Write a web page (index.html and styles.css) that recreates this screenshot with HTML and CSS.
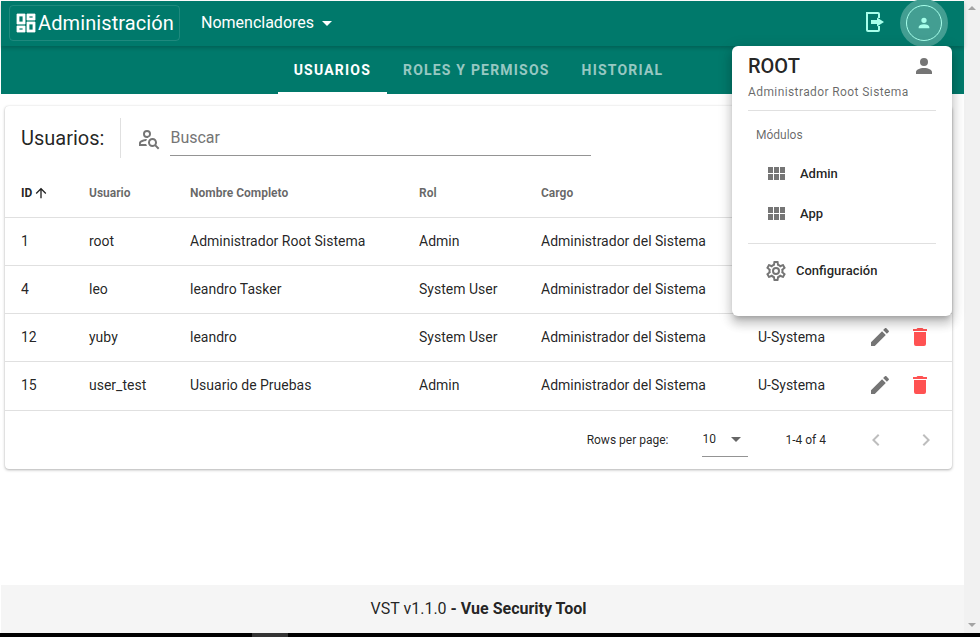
FILE: index.html
```html
<!DOCTYPE html>
<html lang="en">
<head>
  <meta charset="UTF-8" />
  <title>VST - Administración</title>
  <link rel="stylesheet" href="styles.css">
</head>
<body>
  <div class="screen">
    <div class="viewport">
      <div class="app">
        <header class="topbar">
          <div class="brand">
            <svg class="icon-24 brand-icon" viewBox="0 0 24 24"><path d="M19,5V7H15V5H19M9,5V11H5V5H9M19,13V19H15V13H19M9,17V19H5V17H9M21,3H13V9H21V3M11,3H3V13H11V3M21,11H13V21H21V11M11,15H3V21H11V15Z"/></svg>
            <span>Administración</span>
          </div>
          <div class="nomenclators">
            <span>Nomencladores</span>
            <svg class="icon-24" viewBox="0 0 24 24"><path d="M7,10L12,15L17,10H7Z"/></svg>
          </div>
          <div class="topbar-actions">
            <svg class="exit-icon" viewBox="0 0 24 24"><path d="M3,2H15A2,2 0 0,1 17,4V8H15V4H5V20H15V16H17V20A2,2 0 0,1 15,22H5A2,2 0 0,1 3,20V2M14,10V7.5L21,12L14,16.5V14H8V10H14Z"/></svg>
            <div class="avatar-halo">
              <div class="avatar">
                <svg class="icon-16" viewBox="0 0 24 24"><path d="M12,4A4,4 0 0,1 16,8A4,4 0 0,1 12,12A4,4 0 0,1 8,8A4,4 0 0,1 12,4M12,14C16.42,14 20,15.79 20,18V20H4V18C4,15.79 7.58,14 12,14Z"/></svg>
              </div>
            </div>
          </div>
        </header>
        <nav class="tabs">
          <div class="tab active">Usuarios</div>
          <div class="tab">Roles y permisos</div>
          <div class="tab">Historial</div>
        </nav>
        <main class="content">
          <section class="card">
            <div class="card-head">
              <h2>Usuarios:</h2>
              <div class="head-divider"></div>
              <svg class="search-icon" viewBox="0 0 24 24"><path d="M10,13C9.65,13.59 9.36,14.24 9.19,14.93C6.5,15.16 3.9,16.42 3.9,17V18.1H9.2C9.37,18.78 9.65,19.42 10,20H2V17C2,14.34 7.33,13 10,13M10,4A4,4 0 0,1 14,8C14,8.91 13.69,9.75 13.18,10.43C12.32,10.75 11.55,11.26 10.91,11.9L10,12A4,4 0 0,1 6,8A4,4 0 0,1 10,4M10,5.9A2.1,2.1 0 0,0 7.9,8A2.1,2.1 0 0,0 10,10.1A2.1,2.1 0 0,0 12.1,8A2.1,2.1 0 0,0 10,5.9M15.5,12C18,12 20,14 20,16.5C20,17.38 19.75,18.21 19.31,18.9L22.39,22L21,23.39L17.88,20.32C17.19,20.75 16.37,21 15.5,21C13,21 11,19 11,16.5C11,14 13,12 15.5,12M15.5,14A2.5,2.5 0 0,0 13,16.5A2.5,2.5 0 0,0 15.5,19A2.5,2.5 0 0,0 18,16.5A2.5,2.5 0 0,0 15.5,14Z"/></svg>
              <div class="search-field">Buscar</div>
            </div>
            <table class="users">
              <colgroup>
                <col class="c-id"><col class="c-user"><col class="c-name"><col class="c-role"><col class="c-post"><col class="c-unit"><col class="c-act">
              </colgroup>
              <thead>
                <tr>
                  <th class="sorted">ID <svg class="sort-icon" viewBox="0 0 24 24"><path d="M13,20H11V8L5.5,13.5L4.08,12.08L12,4.16L19.92,12.08L18.5,13.5L13,8V20Z"/></svg></th>
                  <th>Usuario</th>
                  <th>Nombre Completo</th>
                  <th>Rol</th>
                  <th>Cargo</th>
                  <th>Unidad</th>
                  <th>Acciones</th>
                </tr>
              </thead>
              <tbody id="rows"></tbody>
            </table>
            <div class="pager">
              <span>Rows per page:</span>
              <div class="per-page">
                <span>10</span>
                <svg class="icon-24" viewBox="0 0 24 24"><path d="M7,10L12,15L17,10H7Z"/></svg>
              </div>
              <span class="range">1-4 of 4</span>
              <svg class="chev" viewBox="0 0 24 24"><path d="M15.41,16.58L10.83,12L15.41,7.41L14,6L8,12L14,18L15.41,16.58Z"/></svg>
              <svg class="chev" viewBox="0 0 24 24"><path d="M8.59,16.58L13.17,12L8.59,7.41L10,6L16,12L10,18L8.59,16.58Z"/></svg>
            </div>
          </section>
        </main>
        <footer class="foot">VST v1.1.0&nbsp;<strong>- Vue Security Tool</strong></footer>

        <aside class="menu">
          <div class="menu-head">
            <div class="menu-name">ROOT</div>
            <svg class="icon-24" viewBox="0 0 24 24"><path d="M12,4A4,4 0 0,1 16,8A4,4 0 0,1 12,12A4,4 0 0,1 8,8A4,4 0 0,1 12,4M12,14C16.42,14 20,15.79 20,18V20H4V18C4,15.79 7.58,14 12,14Z"/></svg>
          </div>
          <div class="menu-sub">Administrador Root Sistema</div>
          <hr class="menu-rule">
          <div class="menu-label">Módulos</div>
          <div class="menu-item">
            <svg class="icon-24" viewBox="0 0 24 24"><path d="M16,5V11H21V5M10,11H15V5H10M16,18H21V12H16M10,18H15V12H10M4,11H9V5H4M4,18H9V12H4V18Z"/></svg>
            <span>Admin</span>
          </div>
          <div class="menu-item">
            <svg class="icon-24" viewBox="0 0 24 24"><path d="M16,5V11H21V5M10,11H15V5H10M16,18H21V12H16M10,18H15V12H10M4,11H9V5H4M4,18H9V12H4V18Z"/></svg>
            <span>App</span>
          </div>
          <hr class="menu-rule">
          <div class="menu-config">
            <svg class="icon-24" viewBox="0 0 24 24"><path d="M12,8A4,4 0 0,1 16,12A4,4 0 0,1 12,16A4,4 0 0,1 8,12A4,4 0 0,1 12,8M12,10A2,2 0 0,0 10,12A2,2 0 0,0 12,14A2,2 0 0,0 14,12A2,2 0 0,0 12,10M10,22C9.75,22 9.54,21.82 9.5,21.58L9.13,18.93C8.5,18.68 7.96,18.34 7.44,17.94L4.95,18.95C4.73,19.03 4.46,18.95 4.34,18.73L2.34,15.27C2.21,15.05 2.27,14.78 2.46,14.63L4.57,12.97L4.5,12L4.57,11L2.46,9.37C2.27,9.22 2.21,8.95 2.34,8.73L4.34,5.27C4.46,5.05 4.73,4.96 4.95,5.05L7.44,6.05C7.96,5.66 8.5,5.32 9.13,5.07L9.5,2.42C9.54,2.18 9.75,2 10,2H14C14.25,2 14.46,2.18 14.5,2.42L14.87,5.07C15.5,5.32 16.04,5.66 16.56,6.05L19.05,5.05C19.27,4.96 19.54,5.05 19.66,5.27L21.66,8.73C21.79,8.95 21.73,9.22 21.54,9.37L19.43,11L19.5,12L19.43,13L21.54,14.63C21.73,14.78 21.79,15.05 21.66,15.27L19.66,18.73C19.54,18.95 19.27,19.04 19.05,18.95L16.56,17.95C16.04,18.34 15.5,18.68 14.87,18.93L14.5,21.58C14.46,21.82 14.25,22 14,22H10M11.25,4L10.88,6.61C9.68,6.86 8.62,7.5 7.85,8.39L5.44,7.35L4.69,8.65L6.8,10.2C6.4,11.37 6.4,12.64 6.8,13.8L4.68,15.36L5.43,16.66L7.86,15.62C8.63,16.5 9.68,17.14 10.87,17.38L11.24,20H12.76L13.13,17.39C14.32,17.14 15.37,16.5 16.14,15.62L18.57,16.66L19.32,15.36L17.2,13.81C17.6,12.64 17.6,11.37 17.2,10.2L19.31,8.65L18.56,7.35L16.15,8.39C15.38,7.5 14.32,6.86 13.12,6.62L12.75,4H11.25Z"/></svg>
            <span>Configuración</span>
          </div>
        </aside>
      </div>
      <div class="scrollbar">
        <div class="arrow-up"></div>
        <div class="arrow-down"></div>
      </div>
    </div>
    <div class="taskbar"><div class="taskbar-thumb"></div></div>
  </div>

  <script>
    const users = [
      ["1", "root", "Administrador Root Sistema", "Admin"],
      ["4", "leo", "leandro Tasker", "System User"],
      ["12", "yuby", "leandro", "System User"],
      ["15", "user_test", "Usuario de Pruebas", "Admin"]
    ];
    const pencil = "M20.71,7.04C21.1,6.65 21.1,6 20.71,5.63L18.37,3.29C18,2.9 17.35,2.9 16.96,3.29L15.12,5.12L18.87,8.87M3,17.25V21H6.75L17.81,9.93L14.06,6.18L3,17.25Z";
    const trash = "M19,4H15.5L14.5,3H9.5L8.5,4H5V6H19M6,19A2,2 0 0,0 8,21H16A2,2 0 0,0 18,19V7H6V19Z";

    document.getElementById("rows").innerHTML = users.map(u => `
      <tr>
        <td>${u[0]}</td>
        <td>${u[1]}</td>
        <td>${u[2]}</td>
        <td>${u[3]}</td>
        <td>Administrador del Sistema</td>
        <td>U-Systema</td>
        <td class="row-actions">
          <svg class="edit" viewBox="0 0 24 24"><path d="${pencil}"/></svg>
          <svg class="remove" viewBox="0 0 24 24"><path d="${trash}"/></svg>
        </td>
      </tr>
    `).join("");
  </script>
</body>
</html>
```

FILE: styles.css
```css
* {
  box-sizing: border-box;
}
body {
  margin: 0;
  font-family: Roboto, "Liberation Sans", sans-serif;
  color: rgba(0,0,0,0.87);
  background: #fff;
}
svg {
  fill: currentColor;
  display: block;
  flex: none;
}
.icon-24 {
  width: 24px;
  height: 24px;
}
.icon-16 {
  width: 16px;
  height: 16px;
}
.screen {
  width: 980px;
  height: 637px;
  display: flex;
  flex-direction: column;
  overflow: hidden;
}
.viewport {
  flex: 1;
  display: flex;
  min-height: 0;
}
.app {
  flex: 1;
  position: relative;
  display: flex;
  flex-direction: column;
  padding: 1px 0 0 1px;
}
.scrollbar {
  width: 16px;
  background: #f1f1f1;
  display: flex;
  flex-direction: column;
  justify-content: space-between;
  align-items: center;
  padding: 6px 0;
}
.arrow-up {
  border: 4px solid transparent;
  border-top: 0;
  border-bottom: 4px solid #a3a3a3;
}
.arrow-down {
  border: 4px solid transparent;
  border-bottom: 0;
  border-top: 4px solid #a3a3a3;
}
.taskbar {
  height: 4px;
  background: #000;
  padding-left: 252px;
}
.taskbar-thumb {
  width: 36px;
  height: 4px;
  background: #333;
}

/* top bar */
.topbar {
  height: 45px;
  background: #00796b;
  color: #fff;
  display: flex;
  align-items: center;
  padding: 0 0 2px 8px;
  position: relative;
  box-shadow: 0 2px 4px rgba(0,0,0,0.2);
  z-index: 1;
}
.brand {
  width: 171px;
  height: 36px;
  display: flex;
  align-items: center;
  gap: 0;
  padding-left: 4px;
  border: 1px solid rgba(255,255,255,0.12);
  border-radius: 4px;
  font-size: 20px;
  letter-spacing: 0.1px;
}
.brand-icon {
  stroke: currentColor;
  stroke-width: 0.8;
}
.nomenclators {
  display: flex;
  align-items: center;
  margin-left: 21px;
  font-size: 16px;
  gap: 1px;
}
.topbar-actions {
  margin-left: auto;
  margin-right: 16px;
  display: flex;
  align-items: center;
  gap: 13px;
  color: #a7ffeb;
}
.exit-icon {
  width: 24px;
  height: 24px;
  margin-bottom: 2px;
}
.avatar-halo {
  width: 48px;
  height: 48px;
  border-radius: 50%;
  background: #439e92;
  display: flex;
  align-items: center;
  justify-content: center;
}
.avatar {
  width: 36px;
  height: 36px;
  border-radius: 50%;
  border: 1px solid #a7ffeb;
  display: flex;
  align-items: center;
  justify-content: center;
}

/* tabs */
.tabs {
  height: 48px;
  background: #00796b;
  display: flex;
  justify-content: center;
  padding-right: 8px;
}
.tab {
  padding: 2px 16px 0;
  display: flex;
  align-items: center;
  font-size: 14px;
  font-weight: 700;
  letter-spacing: 1.2px;
  text-transform: uppercase;
  color: rgba(255,255,255,0.6);
  border-bottom: 2px solid transparent;
}
.tab.active {
  color: #fff;
  border-bottom-color: #fff;
}

/* card and table */
.content {
  flex: 1;
  padding: 12px 12px 0 4px;
}
.card {
  background: #fff;
  border-radius: 4px;
  box-shadow: 0 1px 3px rgba(0,0,0,0.3), 0 0 1px rgba(0,0,0,0.12);
}
.card-head {
  height: 62px;
  display: flex;
  align-items: center;
  padding: 2px 0 0 16px;
}
.card-head h2 {
  margin: 0;
  font-size: 20px;
  font-weight: 400;
}
.head-divider {
  width: 1px;
  height: 40px;
  background: #e0e0e0;
  margin: 0 16px;
}
.search-icon {
  width: 24px;
  height: 24px;
  color: #757575;
  margin-right: 9px;
}
.search-field {
  width: 421px;
  height: 36px;
  line-height: 36px;
  font-size: 16px;
  color: #757575;
  border-bottom: 1px solid #949494;
}
.users {
  width: 100%;
  border-collapse: collapse;
  table-layout: fixed;
}
.c-id { width: 68px; }
.c-user { width: 101px; }
.c-name { width: 229px; }
.c-role { width: 122px; }
.c-post { width: 217px; }
.c-unit { width: 112px; }
th {
  height: 49px;
  padding: 2px 16px 0;
  text-align: left;
  font-size: 12px;
  font-weight: 700;
  color: rgba(0,0,0,0.6);
  border-bottom: 1px solid #e0e0e0;
}
th.sorted {
  color: rgba(0,0,0,0.87);
}
.sort-icon {
  display: inline-block;
  width: 16px;
  height: 16px;
  margin-left: -2px;
  vertical-align: -4px;
}
td {
  height: 48px;
  padding: 0 16px;
  font-size: 14px;
  border-bottom: 1px solid #e0e0e0;
}
tr:last-child td {
  height: 49px;
  padding-bottom: 2px;
}
.row-actions {
  padding: 0;
}
.row-actions svg {
  display: inline-block;
  width: 24px;
  height: 24px;
  vertical-align: middle;
}
.edit {
  color: #757575;
  margin-left: 14px;
  margin-right: 13px;
}
.remove {
  color: #ff5252;
}
.pager {
  height: 58px;
  display: flex;
  align-items: center;
  font-size: 12px;
  padding-right: 14px;
  justify-content: flex-end;
}
.per-page {
  width: 46px;
  height: 34px;
  margin-left: 34px;
  display: flex;
  align-items: center;
  justify-content: space-between;
  border-bottom: 1px solid #949494;
  color: #666;
}
.per-page span {
  color: rgba(0,0,0,0.87);
}
.range {
  margin-left: 37px;
  margin-right: 38px;
}
.chev {
  width: 24px;
  height: 24px;
  color: rgba(0,0,0,0.26);
}
.chev + .chev {
  margin-left: 26px;
}

/* footer */
.foot {
  height: 48px;
  background: #f5f5f5;
  display: flex;
  align-items: center;
  justify-content: center;
  font-size: 16px;
  padding: 0 8px 2px 0;
}
.foot strong {
  font-weight: 700;
}

/* user menu */
.menu {
  position: absolute;
  top: 46px;
  left: 732px;
  width: 220px;
  height: 270px;
  background: #fff;
  border-radius: 6px;
  padding: 0 16px;
  box-shadow: 0 5px 5px -3px rgba(0,0,0,0.2), 0 8px 10px 1px rgba(0,0,0,0.14), 0 3px 14px 2px rgba(0,0,0,0.12);
  z-index: 2;
}
.menu-head {
  display: flex;
  justify-content: space-between;
  align-items: center;
  height: 40px;
  color: #757575;
}
.menu-name {
  font-size: 20px;
  font-weight: 500;
  color: rgba(0,0,0,0.87);
}
.menu-sub {
  font-size: 12px;
  letter-spacing: 0.4px;
  color: rgba(0,0,0,0.6);
  height: 26px;
  line-height: 16px;
  margin-top: -2px;
}
.menu-rule {
  margin: 0;
  border: 0;
  border-top: 1px solid #e0e0e0;
}
.menu-label {
  font-size: 12px;
  color: rgba(0,0,0,0.6);
  padding-left: 8px;
  height: 43px;
  line-height: 48px;
}
.menu-item {
  display: flex;
  align-items: center;
  height: 40px;
  padding-left: 16px;
  gap: 12px;
  font-size: 13px;
  font-weight: 500;
  color: rgba(0,0,0,0.87);
}
.menu-item span,
.menu-config span {
  padding-bottom: 2px;
}
.menu-item svg,
.menu-config svg {
  color: #757575;
}
.menu-config {
  display: flex;
  align-items: center;
  padding-left: 16px;
  margin-top: 15px;
  gap: 8px;
  font-size: 13px;
  font-weight: 500;
  color: rgba(0,0,0,0.87);
}
.menu-item + .menu-rule {
  margin-top: 9px;
}
```
